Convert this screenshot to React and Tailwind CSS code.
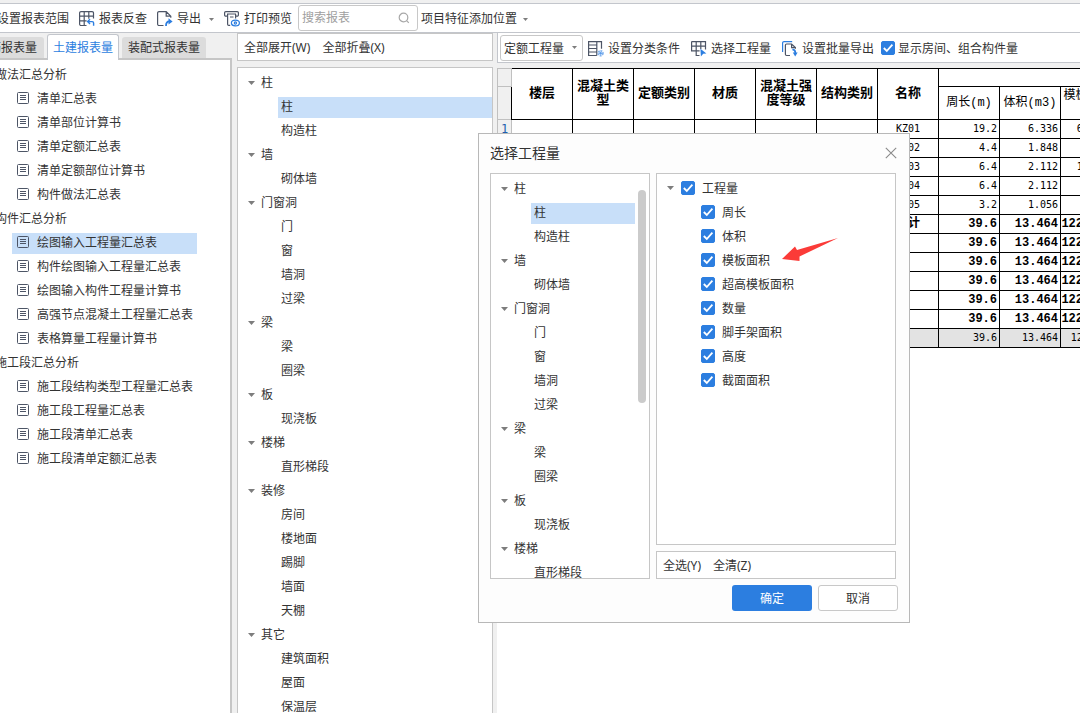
import { useState } from 'react'
import clsx from 'clsx'

const reportGroups = [
  {
    name: '做法汇总分析',
    items: ['清单汇总表', '清单部位计算书', '清单定额汇总表', '清单定额部位计算书', '构件做法汇总表'],
  },
  {
    name: '构件汇总分析',
    items: [
      '绘图输入工程量汇总表',
      '构件绘图输入工程量汇总表',
      '绘图输入构件工程量计算书',
      '高强节点混凝土工程量汇总表',
      '表格算量工程量计算书',
    ],
  },
  {
    name: '施工段汇总分析',
    items: ['施工段结构类型工程量汇总表', '施工段工程量汇总表', '施工段清单汇总表', '施工段清单定额汇总表'],
  },
]

const componentTree = [
  { name: '柱', items: ['柱', '构造柱'] },
  { name: '墙', items: ['砌体墙'] },
  { name: '门窗洞', items: ['门', '窗', '墙洞', '过梁'] },
  { name: '梁', items: ['梁', '圈梁'] },
  { name: '板', items: ['现浇板'] },
  { name: '楼梯', items: ['直形梯段'] },
  { name: '装修', items: ['房间', '楼地面', '踢脚', '墙面', '天棚'] },
  { name: '其它', items: ['建筑面积', '屋面', '保温层'] },
]

const quantities = ['周长', '体积', '模板面积', '超高模板面积', '数量', '脚手架面积', '高度', '截面面积']

const headers = ['楼层', '混凝土类型', '定额类别', '材质', '混凝土强度等级', '结构类别', '名称']

const rows = [
  { name: 'KZ01', values: ['19.2', '6.336', '63.3608'] },
  { name: 'KZ02', values: ['4.4', '1.848', '14.52'] },
  { name: 'KZ03', values: ['6.4', '2.112', '18.4804'] },
  { name: 'KZ04', values: ['6.4', '2.112', '16.08'] },
  { name: 'KZ05', values: ['3.2', '1.056', '10.56'] },
  { name: '合计', bold: true, values: ['39.6', '13.464', '122.9212'] },
  { name: '', bold: true, values: ['39.6', '13.464', '122.9212'] },
  { name: '', bold: true, values: ['39.6', '13.464', '122.9212'] },
  { name: '', bold: true, values: ['39.6', '13.464', '122.9212'] },
  { name: '', bold: true, values: ['39.6', '13.464', '122.9212'] },
  { name: '', bold: true, values: ['39.6', '13.464', '122.9212'] },
  { name: '', total: true, values: ['39.6', '13.464', '122.9212'] },
]

const Icon = ({ children }) => (
  <svg className="h-4 w-4 shrink-0" viewBox="0 0 16 16" fill="none" stroke="#4d5566" strokeWidth="1.2">
    {children}
  </svg>
)

const GridBackIcon = () => (
  <Icon>
    <path d="M7.5 14.5H2a1.4 1.4 0 0 1-1.4-1.4V2A1.4 1.4 0 0 1 2 .6h11.1A1.4 1.4 0 0 1 14.5 2v5.5M.6 5.2h13.9M.6 9.8h7M5.2.6v13.9M9.8.6v7.2" />
    <path d="M11 8.2 8.6 10.6 11 13M8.8 10.6h4.4q1.4 0 1.4 1.4v2.8" stroke="#2c7ee0" strokeWidth="1.4" />
  </Icon>
)

const ExportIcon = () => (
  <Icon>
    <path d="M6.5 14.5H2a1.4 1.4 0 0 1-1.4-1.4V2A1.4 1.4 0 0 1 2 .6h7.2l4.6 4.6v1.6M9.2.6v4.6h4.6" />
    <path d="M9 15c0-3.2 1-4.6 3.3-4.6" stroke="#2c7ee0" strokeWidth="1.8" />
    <path d="M11.5 7.2 15.6 10.4 11.5 13.4z" fill="#2c7ee0" stroke="none" />
  </Icon>
)

const PrintIcon = () => (
  <Icon>
    <path d="M3.4 5.2H1.8A1.2 1.2 0 0 1 .6 4V1.8A1.2 1.2 0 0 1 1.8.6h11.4a1.2 1.2 0 0 1 1.2 1.2V4a1.2 1.2 0 0 1-1.2 1.2h-1.5M3 3h9M3.6 3v10.2q0 1.2 1.2 1.2h1.4M11.6 3v4.5M6 6h3.5" />
    <ellipse cx="11.4" cy="12" rx="4" ry="2.9" stroke="#2c7ee0" fill="#fff" />
    <circle cx="11.4" cy="12" r="1.1" stroke="#2c7ee0" />
  </Icon>
)

const ClassifyIcon = () => (
  <Icon>
    <path d="M8.8 14.5H.6V.6h12.9v7.2M8.8.6v13.9M.6 4h8M.6 7.5h8M.6 11h8" />
    <circle cx="12.6" cy="12.2" r="2.2" stroke="#7fb1ee" strokeWidth="2" strokeDasharray="1.6 .7" />
    <circle cx="12.6" cy="12.2" r="1.2" fill="#5c9ceb" stroke="none" />
  </Icon>
)

const SelectGridIcon = () => (
  <Icon>
    <path d="M8.5 14.5H5.2V.6M.6.6h13.9v8M.6.6v9.2h8M.6 5.2h13.9M9.8.6v7.4" />
    <path d="M9.4 7.8 15.4 12.4 12.2 12.7 9.9 15.6z" fill="#2c7ee0" stroke="none" />
  </Icon>
)

const BatchIcon = () => (
  <Icon>
    <path d="M.6 11V2A1.4 1.4 0 0 1 2 .6h8.2" stroke="#2c7ee0" />
    <path d="M8 14.5H4.6a1.2 1.2 0 0 1-1.2-1.2V4.2A1.2 1.2 0 0 1 4.6 3h5l3.8 3.6v1.2M9.6 3v3.6h3.8" />
    <path d="M10.4 8.4c2.6.2 3 1.4 3 3.8" stroke="#2c7ee0" strokeWidth="1.7" />
    <path d="M10.8 11.4h4.8l-2.4 4z" fill="#2c7ee0" stroke="none" />
  </Icon>
)

const DocIcon = () => (
  <svg className="mb-[2px] h-3 w-3 shrink-0" viewBox="0 0 12 12" fill="none" stroke="#4d5566">
    <rect x=".5" y=".5" width="11" height="11" rx="1" />
    <path d="M3 3.5h6M3 5.5h6M3 7.5h6" />
  </svg>
)

const Caret = ({ small }) => (
  <svg className={clsx('shrink-0', small ? 'h-[3px] w-[5px]' : 'h-1 w-[7px]')} viewBox="0 0 8 4" preserveAspectRatio="none">
    <path d="M0 0h8L4 4z" fill="#7d7d7d" />
  </svg>
)

const CheckItem = ({ label, tight }) => (
  <label className={clsx('flex items-center', tight ? 'gap-[3px]' : 'gap-[7px]')}>
    <span className="grid h-[14px] w-[14px] shrink-0">
      <input
        type="checkbox"
        defaultChecked
        className="peer col-start-1 row-start-1 h-[14px] w-[14px] appearance-none rounded-xs border border-[#c0c0c0] checked:border-[#2c7ee0] checked:bg-[#2c7ee0]"
      />
      <svg
        className="pointer-events-none invisible col-start-1 row-start-1 h-[14px] w-[14px] peer-checked:visible"
        viewBox="0 0 14 14"
        fill="none"
        stroke="#fff"
        strokeWidth="1.8"
      >
        <path d="M2.8 7 5.8 10 11.4 3.6" />
      </svg>
    </span>
    <span className="pt-[2px]">{label}</span>
  </label>
)

const ToolButton = ({ icon, children }) => (
  <button className="flex shrink-0 items-center gap-1 whitespace-nowrap">
    {icon}
    <span>{children}</span>
  </button>
)

const TopBar = () => (
  <header className="mt-[3px] flex h-[30px] shrink-0 items-center overflow-hidden border-y border-[#c3c6cc] bg-white">
    <div className="-ml-[3px] flex shrink-0 items-center gap-[10px] pt-[2px]">
      <button className="whitespace-nowrap">设置报表范围</button>
      <ToolButton icon={<GridBackIcon />}>报表反查</ToolButton>
      <div className="flex items-center gap-2">
        <ToolButton icon={<ExportIcon />}>导出</ToolButton>
        <Caret small />
      </div>
      <ToolButton icon={<PrintIcon />}>打印预览</ToolButton>
    </div>
    <div className="ml-[6px] flex h-[26px] w-[120px] shrink-0 items-center rounded-[3px] border border-[#c8c8c8] px-[3px]">
      <input aria-label="搜索报表" placeholder="搜索报表" className="min-w-0 flex-1 outline-none placeholder:text-[#a0a0a0]" />
      <svg className="mr-1 h-3 w-3" viewBox="0 0 12 12" fill="none" stroke="#a8a8a8" strokeWidth="1.2">
        <circle cx="5.5" cy="5.5" r="4.3" />
        <path d="m8.6 8.6 2.2 2.2" />
      </svg>
    </div>
    <button className="ml-[3px] flex shrink-0 items-center gap-[6px] whitespace-nowrap pt-[2px]">
      项目特征添加位置
      <Caret small />
    </button>
  </header>
)

const ReportPanel = () => {
  const [active, setActive] = useState('绘图输入工程量汇总表')

  return (
    <aside className="flex w-[232px] shrink-0 flex-col overflow-hidden">
      <div className="flex h-[25px] shrink-0 items-end gap-[3px]">
        <button className="-ml-[30px] h-[21px] w-[74px] shrink-0 rounded-t-[3px] bg-[#dcdcdc] whitespace-nowrap">钢筋报表量</button>
        <button className="z-10 -mb-[2px] h-[26px] w-[72px] shrink-0 rounded-t-[3px] border border-b-0 border-[#c3c6cc] bg-white whitespace-nowrap text-[#2c7ee0]">
          土建报表量
        </button>
        <button className="h-[21px] w-[84px] shrink-0 rounded-t-[3px] bg-[#dcdcdc] whitespace-nowrap">装配式报表量</button>
      </div>
      <div className="flex-1 overflow-hidden border-t-2 border-r-2 border-[#c6c6c6] bg-white pt-[3px]">
        {reportGroups.map((group) => (
          <div key={group.name}>
            <div className="-ml-[5px] flex h-6 items-center">{group.name}</div>
            {group.items.map((item) => (
              <div key={item} className="flex h-6 items-center pl-3">
                <button
                  onClick={() => setActive(item)}
                  className={clsx(
                    'flex h-[21px] w-[185px] items-center gap-2 pl-[5px] whitespace-nowrap',
                    active === item && 'bg-[#c8dff9]'
                  )}
                >
                  <DocIcon />
                  {item}
                </button>
              </div>
            ))}
          </div>
        ))}
      </div>
    </aside>
  )
}

const ComponentTree = () => {
  const [active, setActive] = useState('柱')

  return (
    <div className="min-w-0 flex-1">
      {componentTree.map((group) => (
        <div key={group.name}>
          <div className="flex h-6 items-center gap-[6px] pl-[10px]">
            <Caret />
            <span>{group.name}</span>
          </div>
          {group.items.map((item) => (
            <div key={item} className="flex h-6 items-center pl-10">
              <button
                onClick={() => setActive(item)}
                className={clsx('h-[21px] flex-1 pl-[3px] text-left', active === item && 'bg-[#c8dff9]')}
              >
                {item}
              </button>
            </div>
          ))}
        </div>
      ))}
    </div>
  )
}

const TreePanel = () => (
  <section className="ml-[5px] flex w-64 shrink-0 flex-col gap-[6px]">
    <div className="flex h-7 shrink-0 items-center gap-3 border border-[#c6c6c6] bg-white pt-[2px] pl-[6px]">
      <button>全部展开(W)</button>
      <button>全部折叠(X)</button>
    </div>
    <div className="flex flex-1 items-start overflow-hidden border border-b-0 border-[#c6c6c6] bg-white pt-[3px]">
      <ComponentTree />
    </div>
  </section>
)

const QuantityTable = () => (
  <table className="w-[625px] table-fixed border-collapse bg-white font-['Liberation_Mono','Noto_Sans_CJK_SC',monospace] text-black">
    <colgroup>
      <col className="w-[14px]" />
      {Array.from({ length: 10 }).map((_, i) => (
        <col key={i} className="w-[61px]" />
      ))}
    </colgroup>
    <thead className="text-[13px] leading-[14px]">
      <tr className="h-[18px]">
        <th className="border border-[#c0c0c0] bg-[#f0f0f0] p-0" />
        {headers.map((h) => (
          <th key={h} rowSpan={2} className="border border-black px-1 py-0 font-bold">
            {h}
          </th>
        ))}
        <th colSpan={3} className="border border-black p-0" />
      </tr>
      <tr className="h-[33px] text-[12px]">
        <th className="border border-[#c0c0c0] bg-[#f0f0f0] p-0" />
        <th className="border border-black p-0 font-normal">周长(m)</th>
        <th className="border border-black p-0 font-normal">体积(m3)</th>
        <th className="border border-black p-0 font-normal">
          模板面积(
          <br />
          m2)
        </th>
      </tr>
    </thead>
    <tbody>
      {rows.map((row, i) => (
        <tr
          key={i}
          className={clsx(
            'h-[19px]',
            row.bold ? 'text-[12px] font-bold' : "font-['DejaVu_Sans_Mono','Noto_Sans_CJK_SC',monospace] text-[10px]",
            row.total && 'bg-[#e3e3e3]'
          )}
        >
          <th className="border border-[#c0c0c0] bg-[#f0f0f0] p-0 text-[12px] leading-4 font-normal text-[#1f5fae]">
            {i === 0 && i + 1}
          </th>
          {headers.slice(1).map((h) => (
            <td key={h} className="border border-black p-0" />
          ))}
          <td className="border border-black p-0 text-center leading-4">{row.name}</td>
          {row.values.map((v, j) => (
            <td key={j} className="border border-black py-0 pr-[2px] pl-0 text-right leading-4">
              {v}
            </td>
          ))}
        </tr>
      ))}
    </tbody>
  </table>
)

const ReportView = () => (
  <main className="ml-[4px] flex min-w-0 flex-1 flex-col overflow-hidden">
    <div className="flex h-[30px] shrink-0 items-center border-b border-l border-[#c3c6cc] bg-white pl-[2px]">
      <div className="grid shrink-0 items-center">
        <select
          aria-label="工程量类型"
          className="col-start-1 row-start-1 h-[26px] w-[83px] appearance-none rounded-[3px] border border-[#c8c8c8] pt-[2px] pl-[3px] outline-none"
        >
          <option>定额工程量</option>
          <option>清单工程量</option>
        </select>
        <span className="pointer-events-none col-start-1 row-start-1 mr-[6px] justify-self-end">
          <Caret small />
        </span>
      </div>
      <div className="ml-[5px] flex shrink-0 items-center gap-[11px] pt-[2px]">
        <ToolButton icon={<ClassifyIcon />}>设置分类条件</ToolButton>
        <ToolButton icon={<SelectGridIcon />}>选择工程量</ToolButton>
        <ToolButton icon={<BatchIcon />}>设置批量导出</ToolButton>
      </div>
      <div className="ml-[7px] shrink-0 whitespace-nowrap">
        <CheckItem label="显示房间、组合构件量" tight />
      </div>
    </div>
    <div className="h-[5px] shrink-0" />
    <div className="flex-1 overflow-hidden bg-white">
      <QuantityTable />
    </div>
  </main>
)

const SelectDialog = () => (
  <div
    role="dialog"
    aria-labelledby="dialog-title"
    className="absolute top-[133px] left-[478px] z-20 flex h-[490px] w-[432px] flex-col border border-[#b8b8b8] bg-[#fdfdfd] px-[11px]"
  >
    <div className="flex h-[39px] shrink-0 items-center justify-between pb-[2px]">
      <h2 id="dialog-title" className="text-[14px]">
        选择工程量
      </h2>
      <button aria-label="关闭" className="mr-px">
        <svg className="h-3 w-3" viewBox="0 0 12 12" stroke="#8a8a8a" strokeWidth="1.1">
          <path d="M.8.8l10.4 10.4M11.2.8.8 11.2" />
        </svg>
      </button>
    </div>
    <div className="flex h-[406px] shrink-0 gap-[6px]">
      <div className="flex w-[160px] items-start overflow-hidden border border-[#c6c6c6] bg-white pt-[3px] pr-[3px]">
        <ComponentTree />
        <div className="mt-[13px] ml-[3px] h-[213px] w-2 shrink-0 rounded-full bg-[#cbcbcb]" />
      </div>
      <div className="mr-[2px] flex flex-1 flex-col gap-[6px]">
        <div className="flex-1 border border-[#c6c6c6] bg-white pt-[2px]">
          <div className="flex h-6 items-center gap-[7px] pl-[10px]">
            <Caret />
            <CheckItem label="工程量" />
          </div>
          {quantities.map((q) => (
            <div key={q} className="flex h-6 items-center pl-11">
              <CheckItem label={q} />
            </div>
          ))}
        </div>
        <div className="flex h-7 shrink-0 items-center gap-3 border border-[#c6c6c6] bg-white pt-[2px] pl-[6px]">
          <button>全选(Y)</button>
          <button>全清(Z)</button>
        </div>
      </div>
    </div>
    <div className="mt-[6px] flex shrink-0 justify-end gap-[6px]">
      <button className="h-[26px] w-20 rounded-[3px] bg-[#2c7ee0] pt-[2px] text-white">确定</button>
      <button className="h-[26px] w-20 rounded-[3px] border border-[#c8c8c8] bg-white pt-[2px]">取消</button>
    </div>
    <svg className="pointer-events-none absolute top-[104px] left-[303px] h-6 w-14" viewBox="0 0 56 24">
      <path d="M0 21 13 8.5 15 12 56 0 17.5 18.5V23z" fill="#fb3b38" />
    </svg>
  </div>
)

export default function App() {
  return (
    <div className="relative flex h-screen flex-col overflow-hidden bg-[#f0f0f0] font-['Noto_Sans','Noto_Sans_CJK_SC',sans-serif] text-[12px] leading-[18px] text-[#333333]">
      <TopBar />
      <div className="flex min-h-0 flex-1">
        <ReportPanel />
        <TreePanel />
        <ReportView />
      </div>
      <SelectDialog />
    </div>
  )
}
